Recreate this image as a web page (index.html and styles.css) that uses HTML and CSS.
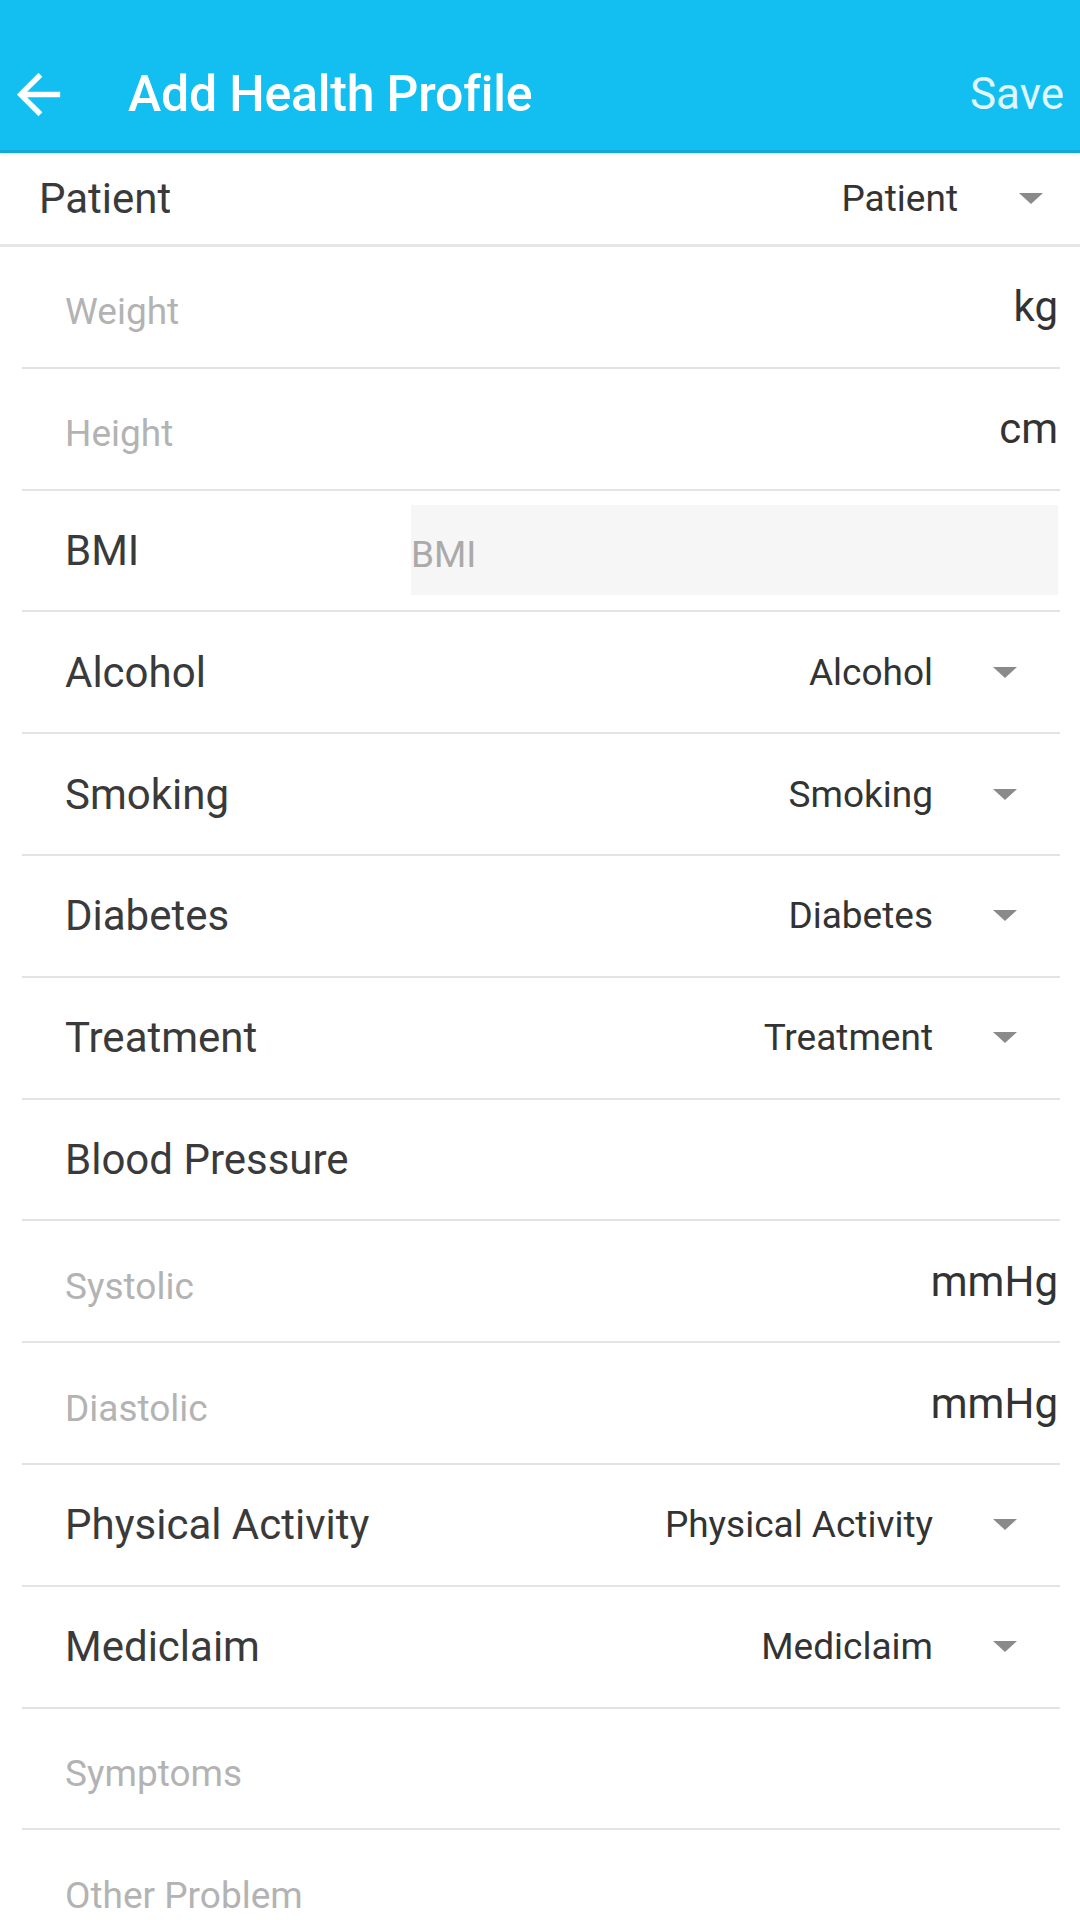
FILE: index.html
```html
<!DOCTYPE html>
<html lang="en">
<head>
  <meta charset="UTF-8" />
  <meta name="viewport" content="width=device-width, initial-scale=1" />
  <title>Add Health Profile</title>
  <link rel="stylesheet" href="styles.css">
</head>
<body>
  <div class="appbar">
    <div class="toolbar">
      <svg class="back" viewBox="0 0 24 24"><path d="M20 11H7.83l5.59-5.59L12 4l-8 8 8 8 1.41-1.41L7.83 13H20v-2z" fill="#fff"/></svg>
      <h1>Add Health Profile</h1>
      <span class="save">Save</span>
    </div>
  </div>

  <div class="patient-row">
    <span class="patient-label">Patient</span>
    <div class="select">
      <span>Patient</span>
      <span class="caret"></span>
    </div>
  </div>

  <div class="form">
    <div class="row">
      <span class="hint">Weight</span>
      <span class="unit">kg</span>
    </div>
    <div class="row">
      <span class="hint">Height</span>
      <span class="unit">cm</span>
    </div>
    <div class="row">
      <span class="label bmi-label">BMI</span>
      <div class="bmi-box">BMI</div>
    </div>
    <div class="row dropdown">
      <span class="label">Alcohol</span>
      <div class="select"><span>Alcohol</span><span class="caret"></span></div>
    </div>
    <div class="row dropdown">
      <span class="label">Smoking</span>
      <div class="select"><span>Smoking</span><span class="caret"></span></div>
    </div>
    <div class="row dropdown">
      <span class="label">Diabetes</span>
      <div class="select"><span>Diabetes</span><span class="caret"></span></div>
    </div>
    <div class="row dropdown">
      <span class="label">Treatment</span>
      <div class="select"><span>Treatment</span><span class="caret"></span></div>
    </div>
    <div class="row">
      <span class="label">Blood Pressure</span>
    </div>
    <div class="row">
      <span class="hint">Systolic</span>
      <span class="unit">mmHg</span>
    </div>
    <div class="row">
      <span class="hint">Diastolic</span>
      <span class="unit">mmHg</span>
    </div>
    <div class="row dropdown">
      <span class="label">Physical Activity</span>
      <div class="select"><span>Physical Activity</span><span class="caret"></span></div>
    </div>
    <div class="row dropdown">
      <span class="label">Mediclaim</span>
      <div class="select"><span>Mediclaim</span><span class="caret"></span></div>
    </div>
    <div class="row">
      <span class="hint">Symptoms</span>
    </div>
    <div class="row">
      <span class="hint">Other Problem</span>
    </div>
  </div>
</body>
</html>
```

FILE: styles.css
```css
body { margin: 0; padding: 0; background: #fff; font-family: Roboto, "Liberation Sans", sans-serif; color: #333; overflow: hidden; }

.appbar { background: #13bff0; padding-top: 38px; border-bottom: 3px solid #11a9d6; box-shadow: 0 2px 3px rgba(0,0,0,0.08); position: relative; z-index: 1; }
.toolbar { height: 112px; display: flex; align-items: center; padding: 0 16px 0 6px; }
.back { width: 65px; height: 65px; flex: none; }
.toolbar h1 { margin: 0 0 0 57px; font-size: 50px; font-weight: 500; color: #fff; flex: 1; letter-spacing: -0.2px; }
.save { font-size: 44px; color: rgba(255,255,255,0.88); }

.patient-row { height: 91px; display: flex; align-items: center; justify-content: space-between; padding: 0 37px 0 39px; border-bottom: 3px solid #e6e6e6; }
.patient-label { font-size: 42px; color: #3a3a3a; }

.select { display: flex; align-items: center; font-size: 37px; color: #333; }
.caret { width: 0; height: 0; border-left: 12px solid transparent; border-right: 12px solid transparent; border-top: 11px solid #8a8a8a; margin-left: 61px; }

.form { margin: 0 20px 0 22px; }
.row { height: 119.8px; display: flex; align-items: center; justify-content: space-between; padding: 0 2px 0 43px; border-bottom: 2px solid #e3e3e3; }
.row.dropdown { padding-right: 43px; }
.row.dropdown .caret { margin-left: 60px; }

.label { font-size: 42px; color: #3a3a3a; }
.hint { font-size: 37px; color: #b3b3b3; padding-top: 10px; }
.unit { font-size: 42px; color: #333; }

.bmi-label { width: 346px; flex: none; }
.bmi-box { flex: 1; height: 90px; background: #f6f6f6; display: flex; align-items: center; font-size: 37px; color: #aaa; padding-top: 8px; box-sizing: border-box; }
```
